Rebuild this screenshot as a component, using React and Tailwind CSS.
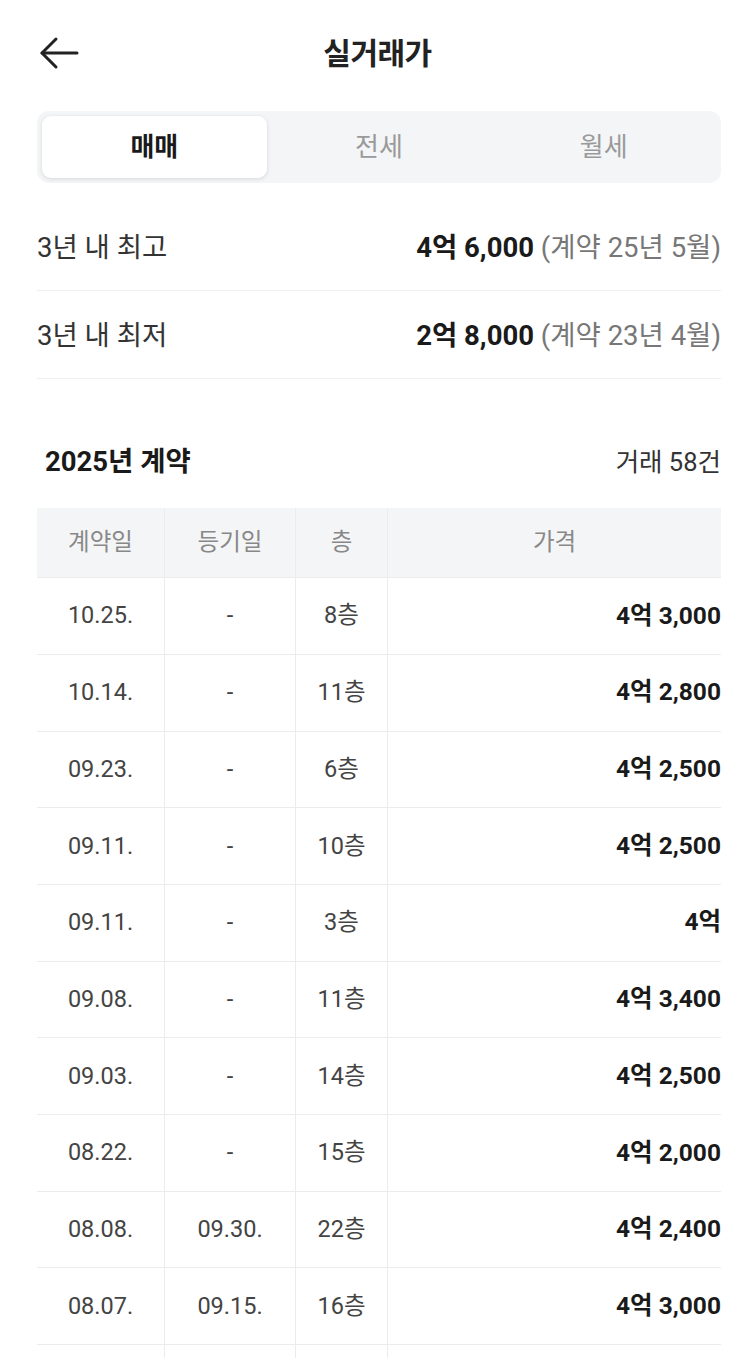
import React, { useState } from 'react';

const FONT = "font-['Roboto','Noto_Sans_CJK_KR',sans-serif]";

const rows = [
  { date: '10.25.', reg: '-', floor: '8층', price: '4억 3,000' },
  { date: '10.14.', reg: '-', floor: '11층', price: '4억 2,800' },
  { date: '09.23.', reg: '-', floor: '6층', price: '4억 2,500' },
  { date: '09.11.', reg: '-', floor: '10층', price: '4억 2,500' },
  { date: '09.11.', reg: '-', floor: '3층', price: '4억' },
  { date: '09.08.', reg: '-', floor: '11층', price: '4억 3,400' },
  { date: '09.03.', reg: '-', floor: '14층', price: '4억 2,500' },
  { date: '08.22.', reg: '-', floor: '15층', price: '4억 2,000' },
  { date: '08.08.', reg: '09.30.', floor: '22층', price: '4억 2,400' },
  { date: '08.07.', reg: '09.15.', floor: '16층', price: '4억 3,000' },
  { date: '', reg: '', floor: '', price: '' },
];

const tabs = ['매매', '전세', '월세'];

const App = () => {
  const [tab, setTab] = useState(0);

  return (
    <div className={`${FONT} bg-white w-[755px] h-[1358px] overflow-hidden text-[#222]`}>
      {/* header */}
      <div className="relative h-[104px] flex items-center justify-center">
        <button className="absolute left-[38px] top-[32px] w-[42px] h-[42px] flex items-center justify-center">
          <svg width="42" height="42" viewBox="0 0 42 42" fill="none" stroke="#222" strokeWidth="3" strokeLinecap="round" strokeLinejoin="round">
            <path d="M39 21H4" />
            <path d="M18 7L4 21l14 14" />
          </svg>
        </button>
        <h1 className="text-[30px] font-bold tracking-[-0.5px] mt-[2px]">실거래가</h1>
      </div>

      <div className="pl-[37px] pr-[34px]">
        {/* tabs */}
        <div className="mt-[7px] h-[72px] rounded-[12px] bg-[#f4f5f7] p-[5px] flex">
          {tabs.map((t, i) => (
            <button
              key={t}
              onClick={() => setTab(i)}
              className={
                i === tab
                  ? 'flex-1 rounded-[9px] bg-white shadow-[0_1px_4px_rgba(0,0,0,0.12)] text-[26px] font-bold text-[#1a1a1a]'
                  : 'flex-1 text-[26px] text-[#9a9a9a]'
              }
            >
              {t}
            </button>
          ))}
        </div>

        {/* summary */}
        <div className="mt-[20px]">
          <div className="h-[88px] flex items-center justify-between border-b border-[#efefef] pt-[2px]">
            <span className="text-[27.5px] text-[#333]">3년 내 최고</span>
            <span className="text-[27.5px]">
              <b className="font-bold text-[#1a1a1a]">4억 6,000</b>{' '}
              <span className="text-[#777]">(계약 25년 5월)</span>
            </span>
          </div>
          <div className="h-[88px] flex items-center justify-between border-b border-[#efefef] pt-[2px]">
            <span className="text-[27.5px] text-[#333]">3년 내 최저</span>
            <span className="text-[27.5px]">
              <b className="font-bold text-[#1a1a1a]">2억 8,000</b>{' '}
              <span className="text-[#777]">(계약 23년 4월)</span>
            </span>
          </div>
        </div>

        {/* year section */}
        <div className="mt-[62px] flex items-center justify-between pl-[8px]">
          <span className="text-[27.5px] font-bold text-[#1a1a1a]">2025년 계약</span>
          <span className="text-[25.5px] text-[#333]">거래 58건</span>
        </div>

        {/* table */}
        <div className="mt-[26px]">
          <div className="flex h-[70px] bg-[#f4f5f7] text-[23.5px] text-[#888] border-b border-[#ececec]">
            <div className="w-[128px] flex items-center justify-center border-r border-[#ececec]">계약일</div>
            <div className="w-[131px] flex items-center justify-center border-r border-[#ececec]">등기일</div>
            <div className="w-[92px] flex items-center justify-center border-r border-[#ececec]">층</div>
            <div className="flex-1 flex items-center justify-center">가격</div>
          </div>
          {rows.map((r, i) => (
            <div key={i} className="flex h-[76.7px] border-b border-[#ececec] text-[23.5px] text-[#444]">
              <div className="w-[128px] flex items-center justify-center border-r border-[#ececec]">{r.date}</div>
              <div className="w-[131px] flex items-center justify-center border-r border-[#ececec]">{r.reg}</div>
              <div className="w-[92px] flex items-center justify-center border-r border-[#ececec]">{r.floor}</div>
              <div className="flex-1 flex items-center justify-end font-bold text-[#1a1a1a] text-[24.5px]">{r.price}</div>
            </div>
          ))}
        </div>
      </div>
    </div>
  );
};

export default App;
